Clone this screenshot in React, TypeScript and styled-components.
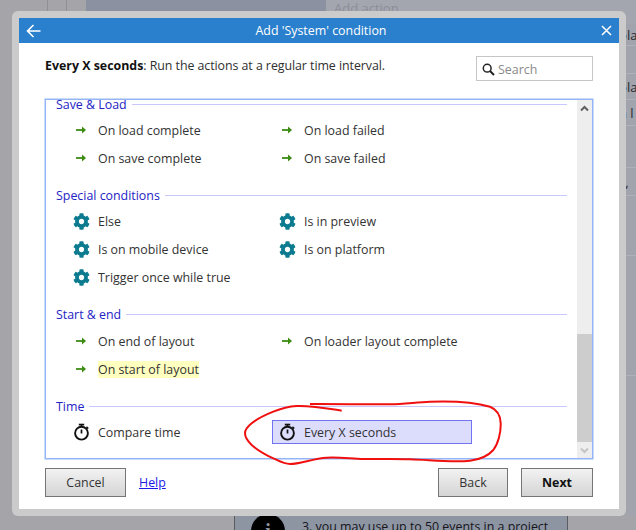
import React from "react";
import styled, { createGlobalStyle } from "styled-components";
import { FaCog } from "react-icons/fa";

const Global = createGlobalStyle`
  html, body { margin: 0; padding: 0; width: 636px; height: 530px; overflow: hidden; }
  body { font-family: "Open Sans", "Liberation Sans", sans-serif; font-size: 12.4px; color: #333; }
  * { box-sizing: border-box; }
`;

const Page = styled.div`
  position: relative;
  width: 636px;
  height: 530px;
  overflow: hidden;
`;

const Backdrop = styled.div`
  width: 100%;
  height: 100%;
  display: flex;
  flex-direction: column;
  background: #a5a4a8;
`;

const TopRow = styled.div`
  height: 24px;
  display: flex;
`;

const LeftStub = styled.div`
  width: 86px;
  display: flex;
  padding-left: 47px;
  gap: 18px;
`;

const StubLine = styled.div`
  width: 1px;
  background: #908f94;
`;

const TopStrip = styled.div`
  width: 240px;
  background: #8b91a0;
`;

const TopPanel = styled.div`
  flex: 1;
  background: #a3a5af;
  padding: 0 0 0 8px;
  color: #8b8e98;
  font-size: 13px;
  line-height: 16px;
`;

const MiddleRow = styled.div`
  flex: 1;
  display: flex;
  justify-content: flex-end;
`;

const SideColumn = styled.div`
  width: 10px;
  display: flex;
  flex-direction: column;
  background: #a1a3ad;
  overflow: hidden;
`;

const SideRow = styled.div<{ $h: number }>`
  height: ${(p) => p.$h}px;
  flex: none;
  white-space: nowrap;
  line-height: ${(p) => p.$h}px;
  font-size: 13px;
  color: #2a2a30;
  margin-left: -7px;
  border-bottom: 1px solid #b0b2ba;
`;

const BottomRow = styled.div`
  height: 14px;
  margin-left: 234px;
  width: 334px;
  background: #8d94a2;
  border-left: 1px solid #5c5c60;
  border-right: 1px solid #5c5c60;
  display: flex;
  padding-left: 16px;
  gap: 17px;
  overflow: hidden;
`;

const InfoDisc = styled.div`
  flex: none;
  width: 34px;
  height: 34px;
  margin-top: -2px;
  border-radius: 50%;
  background: #000;
  color: #8d94a2;
  display: flex;
  justify-content: center;
  font: bold 20px/34px "Liberation Serif", serif;
`;

const BottomText = styled.div`
  font-size: 12.4px;
  line-height: 16px;
  margin-top: 3px;
  color: #15151a;
  white-space: nowrap;
`;

const Frame = styled.div`
  position: absolute;
  left: 12px;
  top: 11px;
  width: 614px;
  height: 505px;
  padding: 7px;
  background: #cbcbcb;
  border-radius: 6px;
`;

const Dialog = styled.div`
  width: 600px;
  height: 491px;
  background: #fff;
  display: flex;
  flex-direction: column;
`;

const Header = styled.div`
  height: 25px;
  flex: none;
  background: #2b80cd;
  color: #fff;
  display: flex;
  align-items: center;
  justify-content: space-between;
  padding: 0 7px 0 7px;
`;

const Title = styled.div`
  flex: 1;
  text-align: center;
  font-size: 12.4px;
`;

const Intro = styled.div`
  height: 56px;
  flex: none;
  display: flex;
  justify-content: space-between;
  padding: 13px 26px 0;
`;

const Description = styled.div`
  color: #2f2f2f;
  line-height: 18px;
  padding-top: 1px;
  letter-spacing: -0.06px;
  b { color: #111; font-weight: 700; letter-spacing: 0; }
`;

const SearchBox = styled.div`
  width: 117px;
  height: 25px;
  border: 1px solid #c6c6c6;
  display: flex;
  align-items: center;
  gap: 3px;
  padding: 1px 0 0 5px;
  color: #8a8a8a;
`;

const ListBox = styled.div`
  height: 360px;
  margin: 0 26px;
  flex: none;
  border: 1px solid #93b5f5;
  border-width: 1px 1.5px 1.5px 1px;
  display: flex;
  box-shadow: 0 0 0 0.5px #93b5f5;
`;

const ListContent = styled.div`
  flex: 1;
  min-width: 0;
  overflow: hidden;
  padding: 0 10px;
`;

const Groups = styled.div`
  margin-top: -3px;
  display: flex;
  flex-direction: column;
  gap: 18px;
`;

const GroupHead = styled.div<{ $after: number }>`
  display: flex;
  align-items: center;
  gap: 5px;
  height: 16px;
  color: #2323c4;
  line-height: 16px;
  margin-bottom: ${(p) => p.$after}px;
  &::after {
    content: "";
    flex: 1;
    height: 1px;
    background: #c8c8ff;
    margin-top: -1px;
  }
`;

const Items = styled.div`
  display: grid;
  grid-template-columns: 200px 200px;
  column-gap: 6px;
  row-gap: 4px;
  padding-left: 10px;
`;

const Item = styled.div<{ $selected?: boolean }>`
  height: 24px;
  display: flex;
  align-items: center;
  border: 1px solid ${(p) => (p.$selected ? "#7272f2" : "transparent")};
  background: ${(p) => (p.$selected ? "#dcdcfd" : "transparent")};
`;

const IconSlot = styled.div`
  width: 31px;
  flex: none;
  padding-left: 8px;
  display: flex;
  align-items: center;
`;

const Label = styled.span<{ $mark?: boolean }>`
  color: #333;
  line-height: 17px;
  background: ${(p) => (p.$mark ? "#ffffc0" : "transparent")};
`;

const ScrollBar = styled.div`
  width: 15px;
  flex: none;
  background: #eeeeee;
  display: flex;
  flex-direction: column;
  align-items: center;
`;

const ScrollButton = styled.div`
  height: 16px;
  width: 100%;
  flex: none;
  display: flex;
  align-items: center;
  justify-content: center;
`;

const ScrollSpace = styled.div`
  flex: 1;
  width: 100%;
  display: flex;
  flex-direction: column;
  justify-content: flex-end;
`;

const ScrollThumb = styled.div`
  height: 108px;
  background: #cdcdcd;
`;

const Footer = styled.div`
  flex: 1;
  display: flex;
  padding: 9px 26px 0;
  align-items: flex-start;
`;

const Button = styled.button<{ $w: number; $strong?: boolean }>`
  width: ${(p) => p.$w}px;
  height: 29px;
  padding: 0;
  border: 1px solid #757575;
  border-radius: 0;
  background: linear-gradient(#f2f2f2, #d4d4d4);
  color: ${(p) => (p.$strong ? "#111" : "#333")};
  font: ${(p) => (p.$strong ? "700" : "400")} 12.4px "Open Sans", sans-serif;
`;

const HelpLink = styled.a`
  margin-left: 13px;
  color: #1a1ae6;
  text-decoration: underline;
  line-height: 29px;
`;

const Spacer = styled.div`
  flex: 1;
`;

const NextGap = styled.div`
  width: 13px;
`;

const Scribble = styled.svg`
  position: absolute;
  left: 0;
  top: 0;
  pointer-events: none;
`;

const ArrowIcon = () => (
  <svg width="12" height="10" viewBox="0 0 12 10">
    <path d="M1 5H10" stroke="#3c8c12" strokeWidth="1.8" fill="none" />
    <path d="M7 1.4L11 5L7 8.6Z" fill="#3c8c12" />
  </svg>
);

const GearIcon = () => <FaCog size={17} color="#0c7a8f" style={{ marginLeft: -2 }} />;

const WatchIcon = () => (
  <svg width="18" height="18" viewBox="0 0 18 18" style={{ marginLeft: -2 }}>
    <circle cx="8.5" cy="10.2" r="6.4" stroke="#111" strokeWidth="1.9" fill="none" />
    <path d="M5.8 1.6H11.2" stroke="#111" strokeWidth="1.8" />
    <path d="M8.5 2V4" stroke="#111" strokeWidth="1.6" />
    <path d="M8.5 6.5V10.5" stroke="#111" strokeWidth="1.7" />
    <path d="M13.4 3.8L15.2 5.6" stroke="#111" strokeWidth="1.5" />
  </svg>
);

const SearchIcon = () => (
  <svg width="13" height="13" viewBox="0 0 13 13">
    <circle cx="5.2" cy="5.2" r="3.9" stroke="#222" strokeWidth="1.5" fill="none" />
    <path d="M8 8L12 12" stroke="#222" strokeWidth="2" />
  </svg>
);

const BackIcon = () => (
  <svg width="15" height="14" viewBox="0 0 15 14">
    <path d="M14.5 7H1.5M7.5 1L1.5 7L7.5 13" stroke="#fff" strokeWidth="1.6" fill="none" />
  </svg>
);

const CloseIcon = () => (
  <svg width="11" height="11" viewBox="0 0 11 11">
    <path d="M1 1L10 10M10 1L1 10" stroke="#fff" strokeWidth="1.5" fill="none" />
  </svg>
);

const Chevron = ({ up, color }: { up?: boolean; color: string }) => (
  <svg width="9" height="7" viewBox="0 0 9 7">
    <path d={up ? "M1 5.5L4.5 2L8 5.5" : "M1 1.5L4.5 5L8 1.5"} stroke={color} strokeWidth="2" fill="none" />
  </svg>
);

type Kind = "arrow" | "gear" | "watch";

const icons: Record<Kind, React.ReactNode> = {
  arrow: <ArrowIcon />,
  gear: <GearIcon />,
  watch: <WatchIcon />,
};

type Entry = { label: string; mark?: boolean; selected?: boolean };

const groups: { title: string; kind: Kind; after: number; items: Entry[] }[] = [
  {
    title: "Save & Load",
    kind: "arrow",
    after: 5,
    items: [
      { label: "On load complete" },
      { label: "On load failed" },
      { label: "On save complete" },
      { label: "On save failed" },
    ],
  },
  {
    title: "Special conditions",
    kind: "gear",
    after: 5,
    items: [
      { label: "Else" },
      { label: "Is in preview" },
      { label: "Is on mobile device" },
      { label: "Is on platform" },
      { label: "Trigger once while true" },
    ],
  },
  {
    title: "Start & end",
    kind: "arrow",
    after: 6,
    items: [
      { label: "On end of layout" },
      { label: "On loader layout complete" },
      { label: "On start of layout", mark: true },
    ],
  },
  {
    title: "Time",
    kind: "watch",
    after: 5,
    items: [{ label: "Compare time" }, { label: "Every X seconds", selected: true }],
  },
];

const scribblePath =
  "M341.7 410.7C325 408 312 405.5 296.7 406C288 406.5 281 408.5 273.3 411.7C265 415 257 419 251.7 423.3C247 427 245 430 245 433.3C245 437 247.5 441 251.7 445C258 450.5 266 455 273.3 458.3C280 461.5 284 464 290 464C300 464 313 458.5 326.7 457.7C339 457 351 458.7 363.3 459C379 459.3 394 458.8 410 459.3C431 460 452 462.5 470 460.7C480 459.5 488 456 493.3 450C498 444 501 433 500.7 423.3C500.5 415 497 409.5 490 406.7C474 402 450 401 430 401.7C416 402.2 404 404.3 390 404.3C365 404.5 335 403.8 310 404";

const sideRows: [number, string][] = [
  [22, "pla"],
  [28, ""],
  [26, "pla"],
  [26, "n l"],
  [42, ""],
  [28, "' ,"],
  [60, ""],
  [120, "'"],
];

export default function App() {
  return (
    <Page>
      <Global />
      <Backdrop>
        <TopRow>
          <LeftStub>
            <StubLine />
            <StubLine />
          </LeftStub>
          <TopStrip />
          <TopPanel>Add action</TopPanel>
        </TopRow>
        <MiddleRow>
          <SideColumn>
            {sideRows.map(([h, t], i) => (
              <SideRow key={i} $h={h}>
                {t}
              </SideRow>
            ))}
          </SideColumn>
        </MiddleRow>
        <BottomRow>
          <InfoDisc>i</InfoDisc>
          <BottomText>3. you may use up to 50 events in a project</BottomText>
        </BottomRow>
      </Backdrop>
      <Frame>
        <Dialog>
          <Header>
            <BackIcon />
            <Title>Add 'System' condition</Title>
            <CloseIcon />
          </Header>
          <Intro>
            <Description>
              <b>Every X seconds</b>: Run the actions at a regular time interval.
            </Description>
            <SearchBox>
              <SearchIcon />
              Search
            </SearchBox>
          </Intro>
          <ListBox>
            <ListContent>
              <Groups>
                {groups.map((g) => (
                  <div key={g.title}>
                    <GroupHead $after={g.after}>{g.title}</GroupHead>
                    <Items>
                      {g.items.map((it) => (
                        <Item key={it.label} $selected={it.selected}>
                          <IconSlot>{icons[g.kind]}</IconSlot>
                          <Label $mark={it.mark}>{it.label}</Label>
                        </Item>
                      ))}
                    </Items>
                  </div>
                ))}
              </Groups>
            </ListContent>
            <ScrollBar>
              <ScrollButton>
                <Chevron up color="#606060" />
              </ScrollButton>
              <ScrollSpace>
                <ScrollThumb />
              </ScrollSpace>
              <ScrollButton>
                <Chevron color="#c4c4c4" />
              </ScrollButton>
            </ScrollBar>
          </ListBox>
          <Footer>
            <Button $w={81}>Cancel</Button>
            <HelpLink>Help</HelpLink>
            <Spacer />
            <Button $w={70}>Back</Button>
            <NextGap />
            <Button $w={72} $strong>
              Next
            </Button>
          </Footer>
        </Dialog>
      </Frame>
      <Scribble width="636" height="530" viewBox="0 0 636 530">
        <path d={scribblePath} stroke="#f01010" strokeWidth="2" fill="none" />
      </Scribble>
    </Page>
  );
}
